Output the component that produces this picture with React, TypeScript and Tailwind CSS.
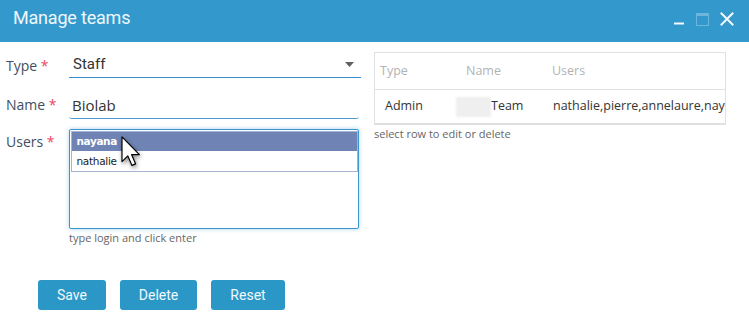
import React from "react";

const poppins = { fontFamily: '"Open Sans", "Noto Sans", sans-serif' };

function Cursor() {
  return (
    <svg
      className="absolute left-[121px] top-[136px] drop-shadow-[1px_2px_2px_rgba(0,0,0,0.45)]"
      width="20"
      height="31"
      viewBox="0 0 12.6 19.6"
    >
      <path
        d="M0.6 0.6 L0.6 16.2 L4.3 12.6 L6.9 18.6 L9.2 17.6 L6.7 11.8 L11.6 11.8 Z"
        fill="#fff"
        stroke="#000"
        strokeWidth="0.75"
        strokeLinejoin="round"
      />
    </svg>
  );
}

export default function App() {
  return (
    <div className="relative w-[749px] h-[327px] bg-white overflow-hidden" style={poppins}>
      {/* Title bar */}
      <div className="h-[42px] bg-[#3399cc] flex items-center justify-between pl-[13px] pr-[15px]">
        <span
          className="text-[#eef7fc] text-[18px] tracking-[-0.2px] leading-none pb-[6px]"
          style={{ fontFamily: 'Roboto, sans-serif' }}
        >
          Manage teams
        </span>
        <div className="flex items-center gap-[11px] pb-[4px]">
          <svg width="12" height="14" viewBox="0 0 12 14">
            <rect x="1" y="10.5" width="10" height="2" fill="#f3f9fd" />
          </svg>
          <svg width="13" height="13" viewBox="0 0 13 13">
            <rect x="0.5" y="0.5" width="12" height="12" fill="none" stroke="#6cb6de" strokeWidth="1" />
            <rect x="0.5" y="0.5" width="12" height="2.5" fill="#6cb6de" />
          </svg>
          <svg width="14" height="14" viewBox="0 0 14 14">
            <path d="M1.5 1.5 L12.5 12.5 M12.5 1.5 L1.5 12.5" stroke="#f3f9fd" strokeWidth="2" strokeLinecap="square" />
          </svg>
        </div>
      </div>

      {/* Body */}
      <div className="flex pt-[10px]">
        {/* Left column */}
        <div className="w-[369px] pl-[6px] flex flex-col">
          {/* Type */}
          <div className="flex h-[26px]">
            <div className="w-[63px] text-[14px] text-[#3f4f61] leading-[26px] pt-[1px]">
              Type <span className="text-[#ec4561]">*</span>
            </div>
            <div
              className="w-[292px] border-b-[1.5px] border-[#3d8fc7] flex items-center justify-between pl-[4px] pr-[7px]"
              style={{ fontFamily: 'Roboto, sans-serif' }}
            >
              <span className="text-[15px] text-[#333]">Staff</span>
              <svg width="9" height="5" viewBox="0 0 9 5">
                <path d="M0 0 L9 0 L4.5 5 Z" fill="#616161" />
              </svg>
            </div>
          </div>

          {/* Name */}
          <div className="flex h-[27px] mt-[14px]">
            <div className="w-[63px] text-[14px] text-[#3f4f61] leading-[26px]">
              Name <span className="text-[#ec4561]">*</span>
            </div>
            <div
              className="w-[290px] border-b-[1.5px] border-[#4b98cc] rounded-b-[3px] flex items-center pl-[3px]"
              style={{ fontFamily: '"Open Sans", sans-serif' }}
            >
              <span className="text-[15px] text-[#333]">Biolab</span>
            </div>
          </div>

          {/* Users */}
          <div className="flex mt-[10px]">
            <div className="w-[63px] text-[14px] text-[#3f4f61] leading-[26px]">
              Users <span className="text-[#ec4561]">*</span>
            </div>
            <div className="flex flex-col">
              <div className="w-[290px] h-[100px] border-[1.5px] border-[#3d97cf] rounded-[2px] shadow-[0_0_4px_rgba(61,151,207,0.45)] bg-white">
                <div
                  className="mx-[0.5px] mt-[0.5px] border border-[#a6b3d3] bg-white text-[10.5px]"
                  style={{ fontFamily: 'Tahoma, "DejaVu Sans", Verdana, sans-serif' }}
                >
                  <div className="h-[19px] bg-[#6f84b4] text-white font-bold pl-[5px] leading-[19px] tracking-[-0.4px]">
                    nayana
                  </div>
                  <div className="h-[20px] text-[#222] pl-[5px] leading-[20px] tracking-[-0.3px]">
                    nathalie
                  </div>
                </div>
              </div>
              <div className="text-[11px] text-[#666] mt-[1px] leading-[16px]">type login and click enter</div>
            </div>
          </div>

          {/* Buttons */}
          <div className="flex gap-[14px] ml-[32px] mt-[34px]" style={{ fontFamily: 'Roboto, sans-serif' }}>
            <button className="w-[68px] h-[30px] bg-[#2b97c7] text-[#f2f9fd] text-[14px] rounded-[3px]">Save</button>
            <button className="w-[77px] h-[30px] bg-[#2b97c7] text-[#f2f9fd] text-[14px] rounded-[3px]">Delete</button>
            <button className="w-[74px] h-[30px] bg-[#2b97c7] text-[#f2f9fd] text-[14px] rounded-[3px]">Reset</button>
          </div>
        </div>

        {/* Right column: table */}
        <div className="ml-[5px] flex flex-col">
          <div className="w-[352px] border border-[#e0e0e0] border-b-2 overflow-hidden">
            <div className="h-[37px] flex items-center border-b border-[#e0e0e0] text-[12.5px] text-[#b3b3b3]">
              <div className="w-[86px] pl-[5px]">Type</div>
              <div className="w-[87px] pl-[5px]">Name</div>
              <div className="pl-[4px]">Users</div>
            </div>
            <div className="h-[33px] flex items-center text-[12.5px] text-[#333] whitespace-nowrap">
              <div className="w-[81px] pl-[10px]">Admin</div>
              <div className="w-[97px] flex items-center">
                <div className="w-[35px] h-[20px] bg-[#efefef] blur-[1px]" />
                <span>Team</span>
              </div>
              <div className="flex-1 overflow-hidden">nathalie,pierre,annelaure,nay</div>
            </div>
          </div>
          <div className="text-[11px] text-[#666] leading-[16px] mt-[1px]">select row to edit or delete</div>
        </div>
      </div>

      <Cursor />
    </div>
  );
}
